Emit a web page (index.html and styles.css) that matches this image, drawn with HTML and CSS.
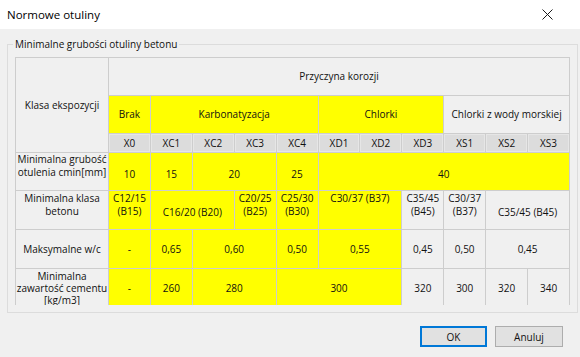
FILE: index.html
```html
<!DOCTYPE html>
<html lang="pl">
<head>
<meta charset="utf-8">
<title>Normowe otuliny</title>
<link rel="stylesheet" href="styles.css">
</head>
<body>
<div class="window">
  <div class="titlebar">
    <span class="title">Normowe otuliny</span>
    <svg class="close" width="11" height="11" viewBox="0 0 11 11"><path d="M0.5 0.5L10.5 10.5M10.5 0.5L0.5 10.5" stroke="#1a1a1a" stroke-width="1" fill="none"/></svg>
  </div>
  <div class="content">
    <fieldset class="group">
      <legend>Minimalne grubości otuliny betonu</legend>
      <div class="viewport">
        <div class="grid">
          <div class="cell head rows3">Klasa ekspozycji</div>
          <div class="cell span11">Przyczyna korozji</div>

          <div class="cell y">Brak</div>
          <div class="cell y span4">Karbonatyzacja</div>
          <div class="cell y span3">Chlorki</div>
          <div class="cell span3">Chlorki z wody morskiej</div>

          <div class="cell bt"><span class="btnx">X0</span></div>
          <div class="cell bt"><span class="btnx">XC1</span></div>
          <div class="cell bt"><span class="btnx">XC2</span></div>
          <div class="cell bt"><span class="btnx">XC3</span></div>
          <div class="cell bt"><span class="btnx">XC4</span></div>
          <div class="cell bt"><span class="btnx">XD1</span></div>
          <div class="cell bt"><span class="btnx">XD2</span></div>
          <div class="cell bt"><span class="btnx">XD3</span></div>
          <div class="cell bt"><span class="btnx">XS1</span></div>
          <div class="cell bt"><span class="btnx">XS2</span></div>
          <div class="cell bt"><span class="btnx">XS3</span></div>

          <div class="cell head up">Minimalna grubość<br>otulenia cmin[mm]</div>
          <div class="cell y down">10</div>
          <div class="cell y down">15</div>
          <div class="cell y span2 down">20</div>
          <div class="cell y down">25</div>
          <div class="cell y span6 down">40</div>

          <div class="cell head up">Minimalna klasa<br>betonu</div>
          <div class="cell y up">C12/15<br>(B15)</div>
          <div class="cell y span2 down1">C16/20 (B20)</div>
          <div class="cell y up">C20/25<br>(B25)</div>
          <div class="cell y up">C25/30<br>(B30)</div>
          <div class="cell y span2 top">C30/37 (B37)</div>
          <div class="cell up">C35/45<br>(B45)</div>
          <div class="cell up">C30/37<br>(B37)</div>
          <div class="cell span2 down1">C35/45 (B45)</div>

          <div class="cell head">Maksymalne w/c</div>
          <div class="cell y">-</div>
          <div class="cell y">0,65</div>
          <div class="cell y span2">0,60</div>
          <div class="cell y">0,50</div>
          <div class="cell y span2">0,55</div>
          <div class="cell">0,45</div>
          <div class="cell">0,50</div>
          <div class="cell span2">0,45</div>

          <div class="cell head tight">Minimalna<br>zawartość cementu<br>[kg/m3]</div>
          <div class="cell y">-</div>
          <div class="cell y">260</div>
          <div class="cell y span2">280</div>
          <div class="cell y span3">300</div>
          <div class="cell">320</div>
          <div class="cell">300</div>
          <div class="cell">320</div>
          <div class="cell">340</div>
        </div>
      </div>
    </fieldset>
    <div class="buttons">
      <button class="btn default">OK</button>
      <button class="btn">Anuluj</button>
    </div>
  </div>
</div>
</body>
</html>
```

FILE: styles.css
```css
* { box-sizing: border-box; }
html, body { margin: 0; padding: 0; }
body {
  width: 580px;
  height: 357px;
  overflow: hidden;
  background: #f0f0f0;
  font-family: "Open Sans", "Noto Sans", sans-serif;
  font-size: 10px;
  color: #111;
}
.window {
  width: 580px;
  height: 357px;
  display: flex;
  flex-direction: column;
}
.titlebar {
  height: 29px;
  background: #ffffff;
  display: flex;
  align-items: center;
  justify-content: space-between;
  padding: 0 27px 0 7px;
}
.title {
  font-size: 11.5px;
  color: #000;
}
.close { display: block; }
.content {
  flex: 1;
  display: flex;
  flex-direction: column;
}
.group {
  margin: 8px 2px 0 7px;
  padding: 6px 7px 7px 7px;
  border: 1px solid #dcdcdc;
  width: 571px;
  min-width: 0;
}
.group legend {
  margin-left: -2px;
  padding: 0 2px;
  line-height: 14px;
  height: 14px;
  font-size: 10px;
  color: #111;
}
.viewport {
  height: 248px;
  overflow: hidden;
}
.grid {
  width: 555px;
  display: grid;
  grid-template-columns: 92px repeat(11, minmax(0, 1fr));
  grid-template-rows: 37px 37px 18px 37px 38px 38px 38px;
  gap: 1px;
  background: #cdcdcd;
  border: 1px solid #cdcdcd;
  border-bottom: 0;
}
.cell {
  background: #f0f0f0;
  display: flex;
  align-items: center;
  justify-content: center;
  text-align: center;
  line-height: 13px;
  white-space: nowrap;
  min-width: 0;
}
.cell.y { background: #ffff00; }
.rows3 { grid-row: span 3; }
.span2 { grid-column: span 2; }
.span3 { grid-column: span 3; }
.span4 { grid-column: span 4; }
.span6 { grid-column: span 6; }
.span11 { grid-column: span 11; }
.up { padding-bottom: 11px; }
.down { padding-top: 5px; }
.down1 { padding-top: 4px; }
.top { padding-bottom: 24px; }
.tight { line-height: 12px; }
.cell.bt {
  padding: 0;
  align-items: stretch;
  background: #ebebeb;
}
.btnx {
  flex: 1;
  display: flex;
  align-items: center;
  justify-content: center;
  background: #dcdcdc;
  border: 1px solid #e6e6e6;
}
.buttons {
  display: flex;
  justify-content: flex-end;
  gap: 8px;
  padding: 13px 17px 0 0;
}
.btn {
  height: 21px;
  width: 68px;
  font-family: "Open Sans", "Noto Sans", sans-serif;
  font-size: 10px;
  color: #111;
  background: #e1e1e1;
  border: 1px solid #adadad;
  padding: 0;
  margin: 0;
}
.btn.default {
  width: 67px;
  border: 2px solid #0078d7;
}
```
